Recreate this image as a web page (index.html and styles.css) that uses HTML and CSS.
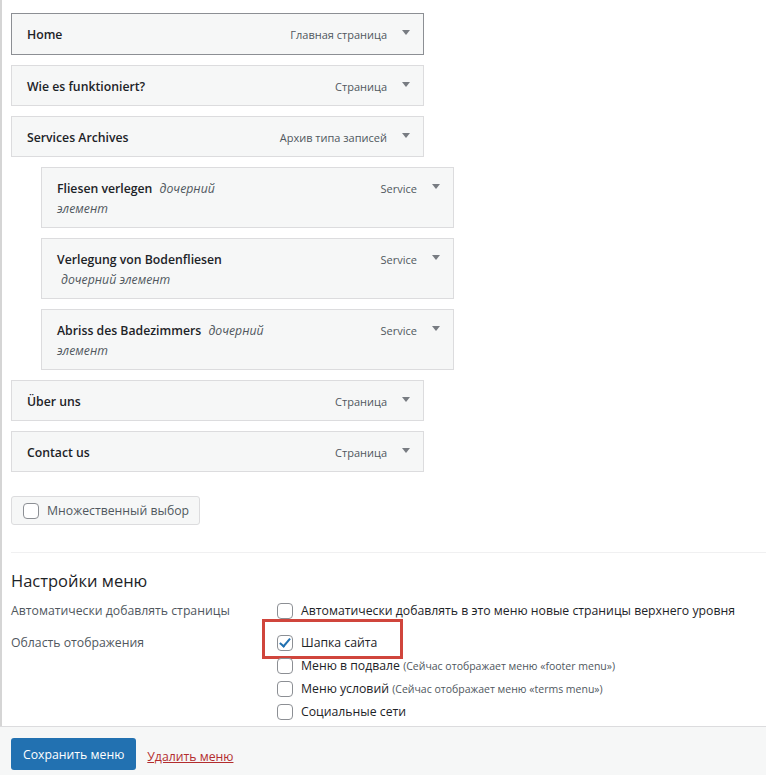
FILE: index.html
```html
<!DOCTYPE html>
<html lang="ru">
<head>
    <meta charset="UTF-8">
    <meta name="viewport" content="width=device-width, initial-scale=1.0">
    <title>Меню</title>
    <link rel="stylesheet" href="styles.css">
</head>
<body>

<div class="menu-edit">
    <ul class="menu">
        <li class="menu-item active">
            <div class="item-bar">
                <span class="item-title">Home</span>
                <span class="item-type">Главная страница</span>
                <svg class="arrow" viewBox="0 0 8 5"><path d="M0 0h8L4 5z"/></svg>
            </div>
        </li>
        <li class="menu-item">
            <div class="item-bar">
                <span class="item-title">Wie es funktioniert?</span>
                <span class="item-type">Страница</span>
                <svg class="arrow" viewBox="0 0 8 5"><path d="M0 0h8L4 5z"/></svg>
            </div>
        </li>
        <li class="menu-item">
            <div class="item-bar">
                <span class="item-title">Services Archives</span>
                <span class="item-type">Архив типа записей</span>
                <svg class="arrow" viewBox="0 0 8 5"><path d="M0 0h8L4 5z"/></svg>
            </div>
        </li>
        <li class="menu-item depth-1">
            <div class="item-bar">
                <span class="item-title">Fliesen verlegen <span class="sub">дочерний<br>элемент</span></span>
                <span class="item-type">Service</span>
                <svg class="arrow" viewBox="0 0 8 5"><path d="M0 0h8L4 5z"/></svg>
            </div>
        </li>
        <li class="menu-item depth-1">
            <div class="item-bar">
                <span class="item-title">Verlegung von Bodenfliesen<br><span class="sub">дочерний элемент</span></span>
                <span class="item-type">Service</span>
                <svg class="arrow" viewBox="0 0 8 5"><path d="M0 0h8L4 5z"/></svg>
            </div>
        </li>
        <li class="menu-item depth-1">
            <div class="item-bar">
                <span class="item-title">Abriss des Badezimmers <span class="sub">дочерний<br>элемент</span></span>
                <span class="item-type">Service</span>
                <svg class="arrow" viewBox="0 0 8 5"><path d="M0 0h8L4 5z"/></svg>
            </div>
        </li>
        <li class="menu-item">
            <div class="item-bar">
                <span class="item-title">Über uns</span>
                <span class="item-type">Страница</span>
                <svg class="arrow" viewBox="0 0 8 5"><path d="M0 0h8L4 5z"/></svg>
            </div>
        </li>
        <li class="menu-item">
            <div class="item-bar">
                <span class="item-title">Contact us</span>
                <span class="item-type">Страница</span>
                <svg class="arrow" viewBox="0 0 8 5"><path d="M0 0h8L4 5z"/></svg>
            </div>
        </li>
    </ul>

    <label class="bulk-select">
        <input type="checkbox" class="cb">
        Множественный выбор
    </label>

    <div class="menu-settings">
        <h3>Настройки меню</h3>

        <div class="setting-row">
            <div class="setting-label">Автоматически добавлять страницы</div>
            <div class="setting-options">
                <label class="option"><input type="checkbox" class="cb"> Автоматически добавлять в это меню новые страницы верхнего уровня</label>
            </div>
        </div>

        <div class="setting-row">
            <div class="setting-label">Область отображения</div>
            <div class="setting-options">
                <label class="option highlight"><input type="checkbox" class="cb" checked> Шапка сайта</label>
                <label class="option"><input type="checkbox" class="cb"> <span>Меню в подвале <small>(Сейчас отображает меню «footer menu»)</small></span></label>
                <label class="option"><input type="checkbox" class="cb"> <span>Меню условий <small>(Сейчас отображает меню «terms menu»)</small></span></label>
                <label class="option"><input type="checkbox" class="cb"> Социальные сети</label>
            </div>
        </div>
    </div>
</div>

<div class="footer">
    <button class="save">Сохранить меню</button>
    <a href="#" class="delete">Удалить меню</a>
</div>

</body>
</html>
```

FILE: styles.css
```css
body {
    margin: 0;
    font-family: "Open Sans", "Noto Sans", sans-serif;
    font-size: 12.25px;
    color: #1d2327;
    background-color: #fff;
}

.menu-edit {
    border-left: 2px solid #d5d5d5;
    padding: 13px 0 0 9px;
    height: 726px;
    box-sizing: border-box;
}

.menu {
    list-style: none;
    margin: 0;
    padding: 0;
}

.menu-item {
    width: 413px;
    margin-bottom: 10px;
}

.menu-item.depth-1 {
    margin-left: 30px;
}

.item-bar {
    display: flex;
    align-items: flex-start;
    background-color: #f6f7f7;
    border: 1px solid #dcdcde;
    padding: 11px 13px 8px 15px;
    line-height: 20px;
}

.menu-item.active .item-bar {
    border-color: #8c8f94;
    padding-bottom: 9px;
}

.item-title {
    flex: 1;
    font-weight: 600;
    color: #1d2327;
}

.item-title .sub {
    font-weight: 400;
    font-style: italic;
    color: #50575e;
    margin-left: 4px;
}

.item-type {
    margin-left: auto;
    font-size: 11px;
    color: #50575e;
    white-space: nowrap;
}

.arrow {
    width: 8px;
    height: 5px;
    margin: 5px 0 0 15px;
    fill: #787c82;
    flex-shrink: 0;
}

.cb {
    appearance: none;
    -webkit-appearance: none;
    width: 16px;
    height: 16px;
    margin: 0;
    border: 1px solid #8c8f94;
    border-radius: 4px;
    background-color: #fff;
    flex-shrink: 0;
    position: relative;
}

.cb:checked::after {
    content: "";
    position: absolute;
    left: 4px;
    top: 0px;
    width: 4px;
    height: 9px;
    border: solid #2271b1;
    border-width: 0 2px 2px 0;
    transform: rotate(40deg);
}

.bulk-select {
    display: inline-flex;
    align-items: center;
    gap: 8px;
    margin-top: 14px;
    padding: 5px 10px 5px 11px;
    border: 1px solid #dcdcde;
    border-radius: 3px;
    background-color: #f6f7f7;
    color: #50575e;
    font-size: 12.25px;
    line-height: 17px;
}

.menu-settings {
    margin-top: 27px;
    border-top: 1px solid #f0f0f1;
}

.menu-settings h3 {
    margin: 16px 0 8px;
    font-size: 16.5px;
    font-weight: 400;
    line-height: 24px;
    color: #1d2327;
}

.setting-row {
    display: flex;
    margin-bottom: 12px;
}

.setting-label {
    width: 266px;
    color: #50575e;
    line-height: 20px;
}

.setting-options {
    display: flex;
    flex-direction: column;
    gap: 3px;
}

.option {
    display: flex;
    align-items: center;
    gap: 8px;
    line-height: 20px;
    color: #1d2327;
}

.option small {
    font-size: 10.5px;
    color: #50575e;
}

.option.highlight {
    border: 3px solid #d0453c;
    padding: 11px 23px 3px 12px;
    margin: -14px -26px -6px -15px;
    align-self: flex-start;
}

.footer {
    border-top: 1px solid #dcdcde;
    background-color: #f6f7f7;
    padding: 11px 11px 0;
    height: 49px;
    box-sizing: border-box;
    display: flex;
    align-items: flex-start;
    gap: 11px;
}

.save {
    font-family: inherit;
    font-size: 12.25px;
    color: #fff;
    background-color: #2271b1;
    border: none;
    border-radius: 3px;
    padding: 0 12px;
    height: 32px;
    cursor: pointer;
}

.delete {
    align-self: center;
    color: #b32d2e;
    text-decoration: underline;
}
```
